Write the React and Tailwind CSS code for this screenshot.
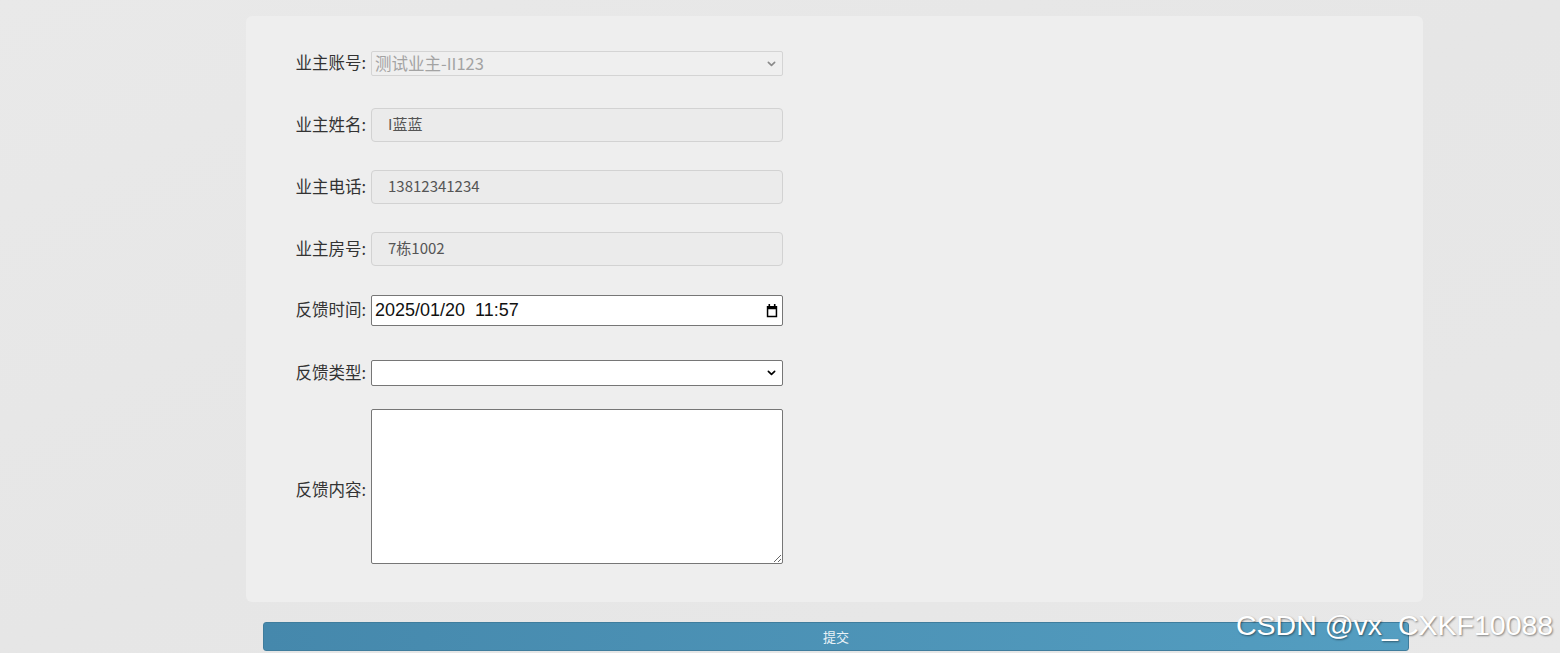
import React from 'react';

const cjk = { fontFamily: '"Noto Sans CJK SC", "Noto Sans", sans-serif' };

function Chevron({ className }) {
  return (
    <svg viewBox="0 0 10 6" className={className} fill="none" stroke="currentColor" strokeWidth="1.8" strokeLinecap="round" strokeLinejoin="round">
      <path d="M1.5 1.2 5 4.6 8.5 1.2" />
    </svg>
  );
}

function Calendar() {
  return (
    <svg viewBox="0 0 12 14" className="w-[12px] h-[14px] text-black" fill="currentColor">
      <rect x="2.5" y="0" width="1.6" height="3" />
      <rect x="7.9" y="0" width="1.6" height="3" />
      <path d="M0.8 2h10.4v11.2H0.8z M2.3 5.2v6.5h7.4V5.2z" fillRule="evenodd" />
    </svg>
  );
}

function Row({ label, children, className = '', labelClass = 'pb-[3px]' }) {
  return (
    <div className={`flex items-center ${className}`}>
      <label className={`w-[121px] text-right text-[16.5px] leading-[20px] text-[#333] pr-[1px] ${labelClass}`} style={cjk}>
        {label}:
      </label>
      <div className="ml-[4px] w-[412px]">{children}</div>
    </div>
  );
}

function ReadOnlyField({ value }) {
  return (
    <div
      className="h-[34px] rounded-[4px] border border-[#d2d2d2] bg-[#ebebeb] flex items-center pl-[16px] pb-[1px] text-[15px] text-[#555]"
      style={cjk}
    >
      {value}
    </div>
  );
}

export default function App() {
  return (
    <div className="relative min-h-[653px] w-full overflow-hidden bg-gradient-to-br from-[#e9e9e9] via-[#e6e6e6] to-[#e8e8e8]">
      <div className="ml-[246px] mt-[16px] w-[1177px] rounded-[6px] bg-[#eeeeee] pt-[35px] pb-[38px]">
        <Row label="业主账号">
          <div className="h-[25px] rounded-[2px] border border-[#d4d4d4] bg-[#efefef] flex items-center justify-between pl-[3px] pr-[6px]">
            <span className="text-[16.5px] leading-[20px] pb-[2px] text-[#a3a3a3]" style={cjk}>测试业主-II123</span>
            <Chevron className="w-[9px] h-[6px] text-[#8a8a8a]" />
          </div>
        </Row>

        <Row label="业主姓名" className="mt-[32px]">
          <ReadOnlyField value="I蓝蓝" />
        </Row>

        <Row label="业主电话" className="mt-[28px]">
          <ReadOnlyField value="13812341234" />
        </Row>

        <Row label="业主房号" className="mt-[28px]">
          <ReadOnlyField value="7栋1002" />
        </Row>

        <Row label="反馈时间" className="mt-[29px]">
          <div className="h-[31px] rounded-[2px] border border-[#767676] bg-white flex items-center justify-between pl-[3px] pr-[4px]">
            <span className="text-[18px] text-[#111]" style={{ fontFamily: '"Liberation Sans", sans-serif' }}>
              2025/01/20&nbsp;&nbsp;11:57
            </span>
            <Calendar />
          </div>
        </Row>

        <Row label="反馈类型" className="mt-[34px]">
          <div className="h-[26px] rounded-[2px] border border-[#767676] bg-white flex items-center justify-end pr-[6px]">
            <Chevron className="w-[9px] h-[6px] text-black" />
          </div>
        </Row>

        <Row label="反馈内容" className="mt-[23px]" labelClass="pt-[5px]">
          <textarea
            className="block h-[155px] w-[412px] rounded-[2px] border border-[#767676] bg-white resize"
            defaultValue=""
          />
        </Row>
      </div>

      <div className="ml-[263px] mt-[20px] w-[1146px]">
        <button
          className="h-[29px] w-full rounded-[3px] border border-[#3f7d9d] bg-gradient-to-r from-[#4588ac] to-[#549ec1] text-[13px] text-[#e9f2f7]"
          style={cjk}
        >
          提交
        </button>
      </div>

      <div
        className="absolute left-[1236px] top-[607px] whitespace-nowrap text-[28.5px] leading-[36px] text-white [text-shadow:1px_1px_2px_rgba(0,0,0,0.45)]"
        style={{ fontFamily: '"Liberation Sans", sans-serif' }}
      >
        CSDN @vx_CXKF10088
      </div>
    </div>
  );
}
